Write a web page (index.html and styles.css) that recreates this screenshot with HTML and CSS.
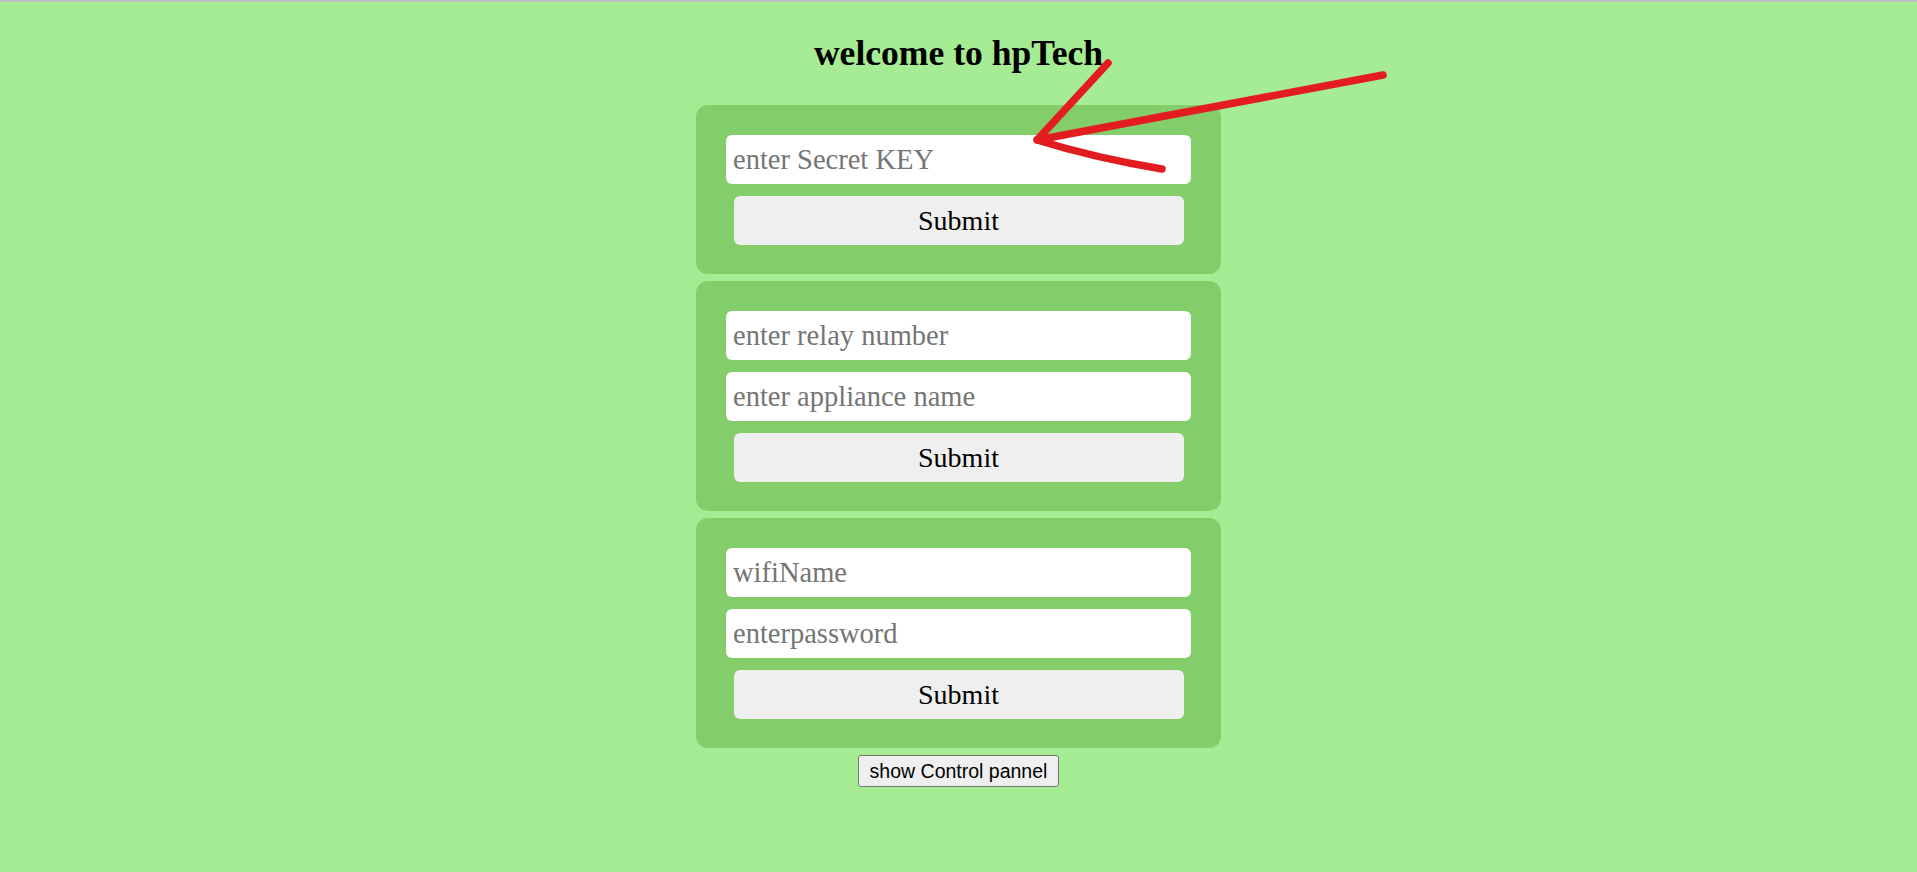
FILE: index.html
```html
<!DOCTYPE html>
<html lang="en">
<head>
<meta charset="utf-8">
<title>hpTech</title>
<link rel="stylesheet" href="styles.css">
</head>
<body>
<div class="page">
  <h1 class="title">welcome to hpTech</h1>
  <form class="card">
    <input class="field" type="text" placeholder="enter Secret KEY">
    <button class="submit" type="button">Submit</button>
  </form>
  <form class="card">
    <input class="field" type="text" placeholder="enter relay number">
    <input class="field" type="text" placeholder="enter appliance name">
    <button class="submit" type="button">Submit</button>
  </form>
  <form class="card">
    <input class="field" type="text" placeholder="wifiName">
    <input class="field" type="text" placeholder="enterpassword">
    <button class="submit" type="button">Submit</button>
  </form>
  <button class="panel-btn" type="button">show Control pannel</button>
</div>
<svg class="annotation" width="1917" height="872" viewBox="0 0 1917 872" aria-hidden="true">
  <path d="M1383 75 L1037 140 Q1095 158 1162 169 M1108 63 L1037 140" fill="none" stroke="#e31c20" stroke-width="7.5" stroke-linecap="round" stroke-linejoin="round"/>
</svg>
</body>
</html>
```

FILE: styles.css
```css
html, body {
  margin: 0;
  padding: 0;
}

body {
  background: #a6ec94;
  border-top: 2px solid #bfbfbf;
  min-height: 870px;
  font-family: "Liberation Serif", "Times New Roman", serif;
  position: relative;
}

.page {
  display: flex;
  flex-direction: column;
  align-items: center;
  padding-top: 31px;
}

.title {
  margin: 0 0 32px;
  font-size: 35.6px;
  line-height: 40px;
  font-weight: bold;
  color: #000;
}

.card {
  box-sizing: border-box;
  width: 525px;
  margin: 0 0 7px;
  padding: 30px 30px 29px;
  background: #83ce6b;
  border-radius: 12px;
  display: flex;
  flex-direction: column;
  gap: 12px;
}

.field {
  box-sizing: border-box;
  width: 100%;
  height: 49px;
  margin: 0;
  padding: 0 7px;
  border: none;
  border-radius: 6px;
  background: #fff;
  font-family: "Liberation Serif", "Times New Roman", serif;
  font-size: 28.5px;
  color: #000;
  outline: none;
}

.field::placeholder {
  color: #757575;
}

.submit {
  box-sizing: border-box;
  align-self: center;
  width: 450px;
  height: 49px;
  margin: 0;
  padding: 0;
  border: none;
  border-radius: 6px;
  background: #efefef;
  font-family: "Liberation Serif", "Times New Roman", serif;
  font-size: 28px;
  color: #000;
}

.panel-btn {
  box-sizing: border-box;
  height: 32px;
  margin: 0;
  padding: 0 11px;
  border: 1px solid #767676;
  border-radius: 3px;
  background: #efefef;
  font-family: "Liberation Sans", Arial, sans-serif;
  font-size: 19.5px;
  color: #000;
}

.annotation {
  position: absolute;
  top: -2px;
  left: 0;
  pointer-events: none;
}
```
